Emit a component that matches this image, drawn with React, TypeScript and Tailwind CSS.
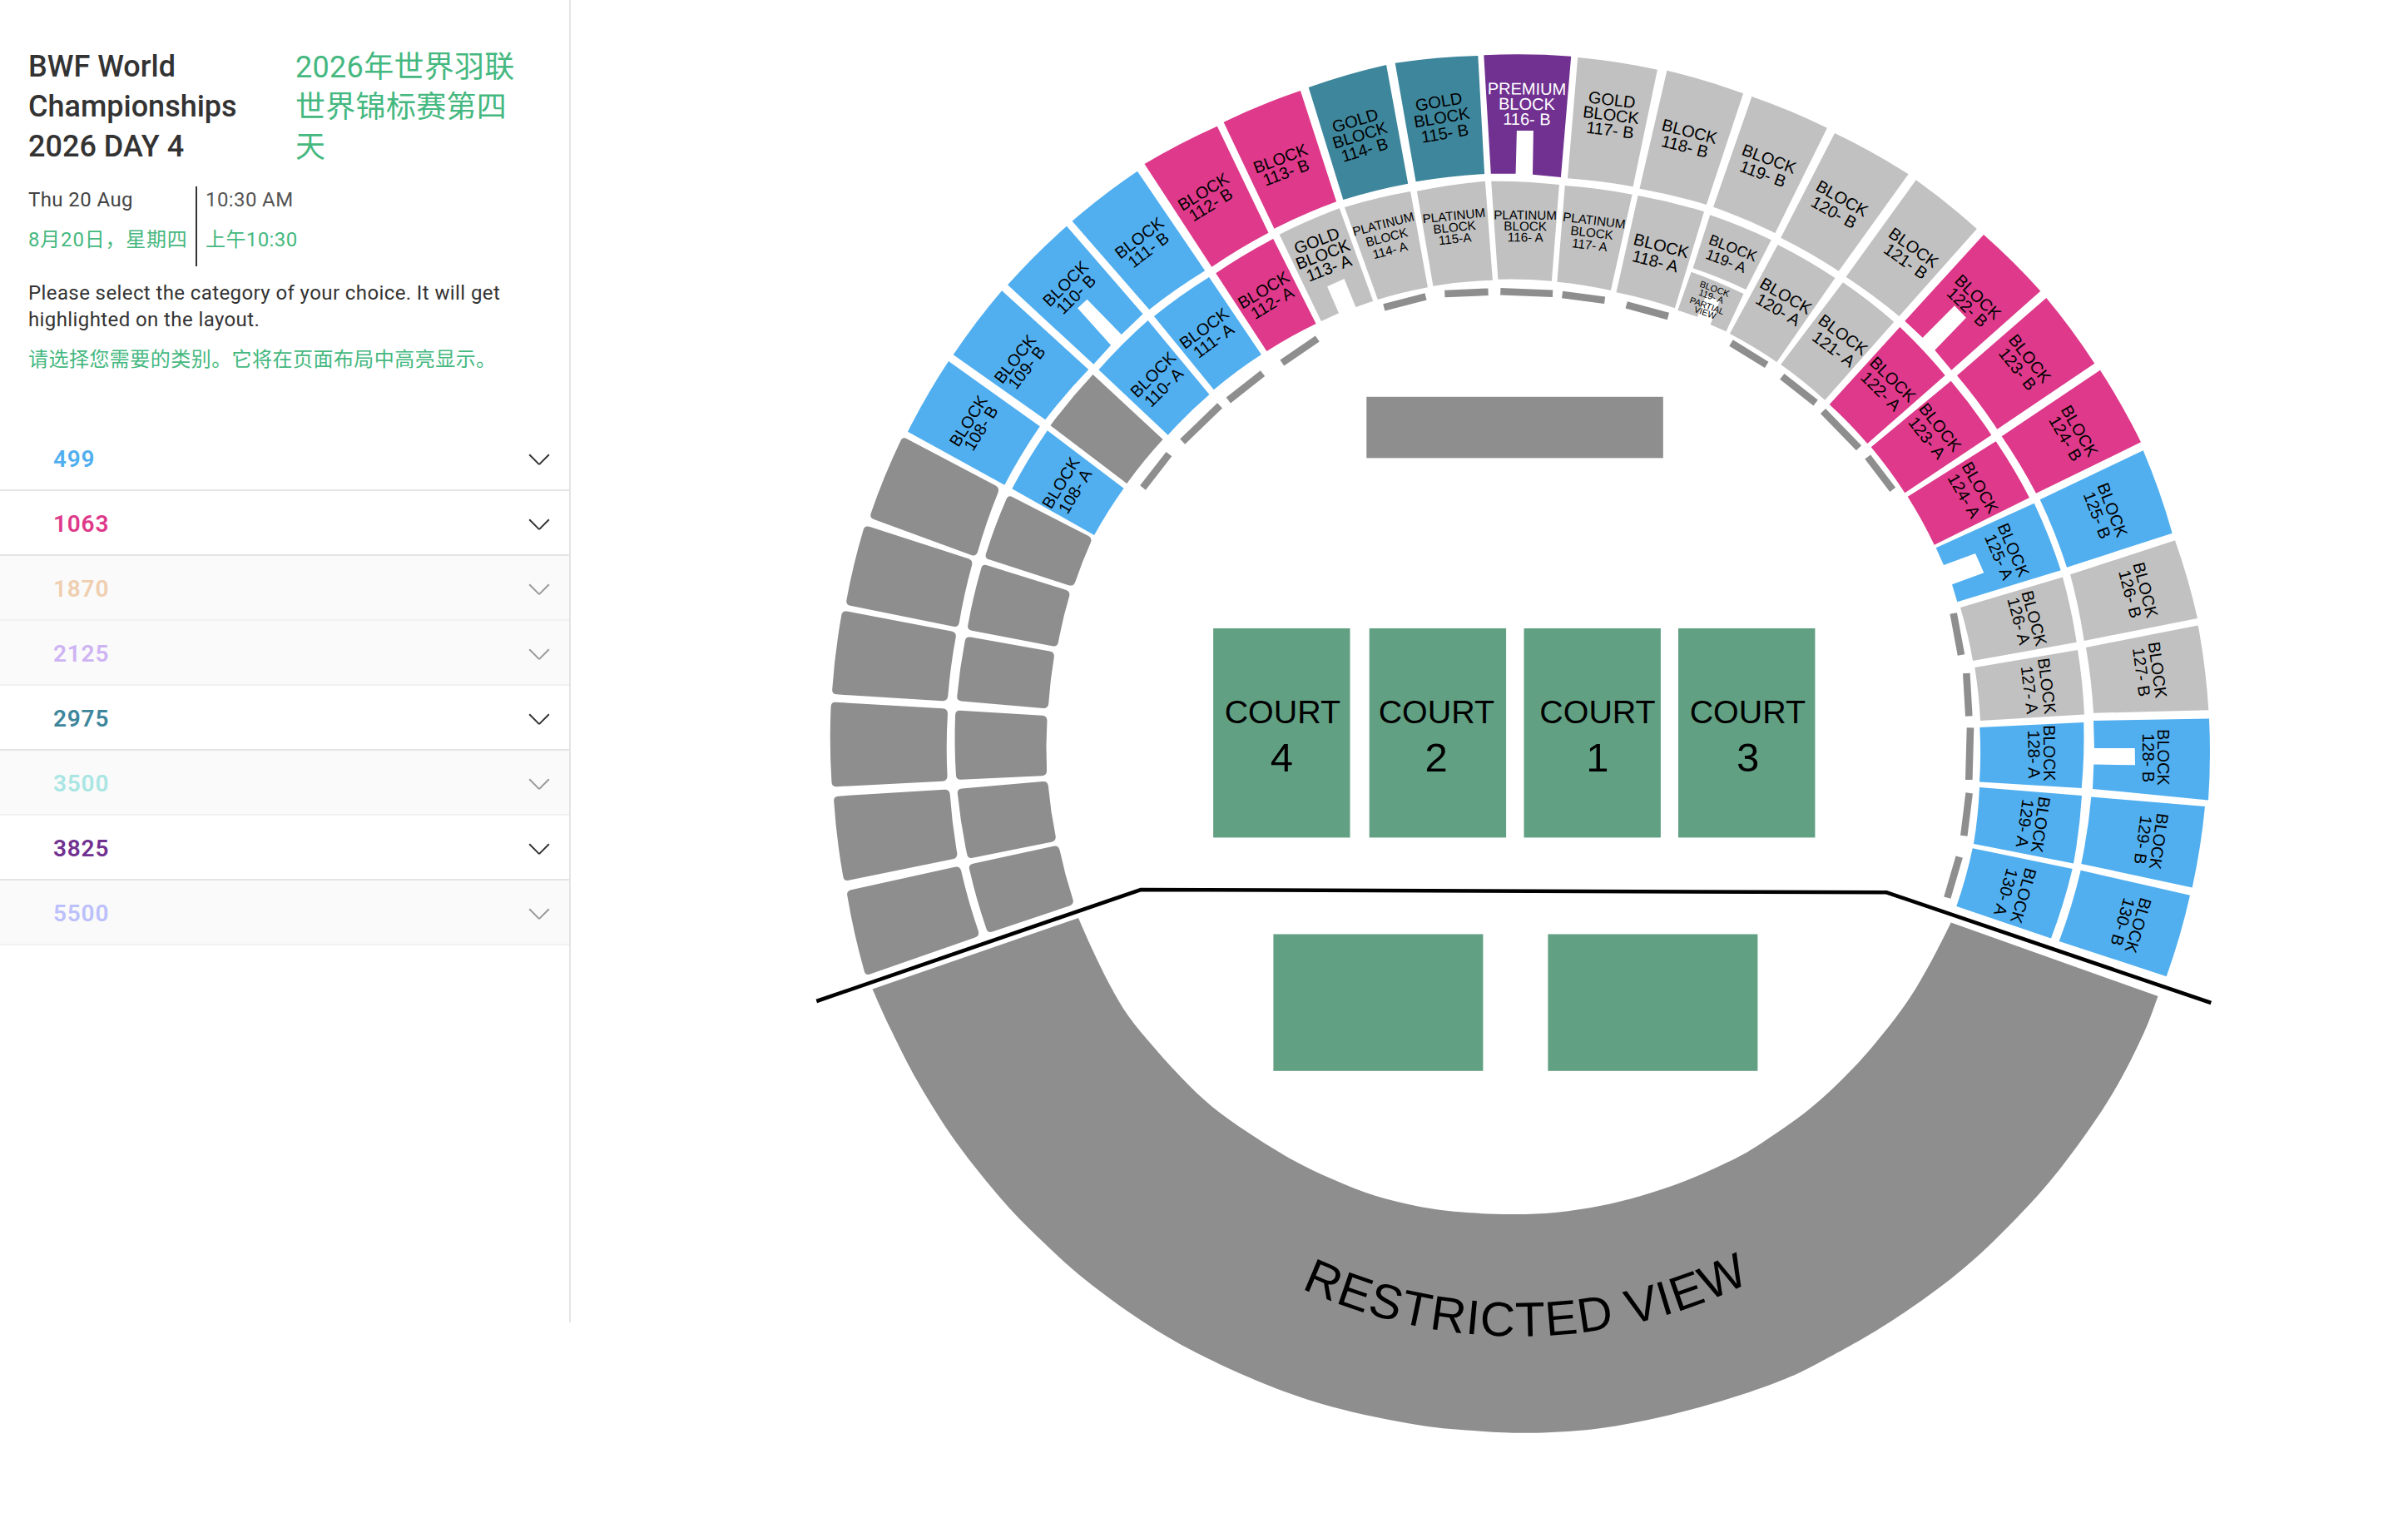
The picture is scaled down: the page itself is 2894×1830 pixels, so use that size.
type Price = {
  value: string;
  colour: string;
  soldOut?: boolean;
};

type Block = {
  fill: string;
  // outer edge first, then clockwise back along the inner edge
  pts: number[][];
  outer: number;
  inner: number;
};

type Label = {
  lines: string[];
  // centre of the first and of the last line
  from: [number, number];
  to: [number, number];
  angle: number;
  size?: number;
  fill?: string;
};

const BLUE = "#51aff0";
const PINK = "#de398a";
const TEAL = "#3e869c";
const PURPLE = "#713191";
const SILVER = "#c1c1c1";
const GREY = "#8e8e8e";
const GREEN = "#62a083";

const prices: Price[] = [
  { value: "499", colour: "text-[#51aff0]" },
  { value: "1063", colour: "text-[#de398a]" },
  { value: "1870", colour: "text-[#efcfb0]", soldOut: true },
  { value: "2125", colour: "text-[#ceb4f3]", soldOut: true },
  { value: "2975", colour: "text-[#3e869c]" },
  { value: "3500", colour: "text-[#a9e6e3]", soldOut: true },
  { value: "3825", colour: "text-[#713191]" },
  { value: "5500", colour: "text-[#bcc0fb]", soldOut: true },
];

function upper(fill: string, ...pts: number[][]): Block {
  return { fill, pts, outer: 829, inner: 686 };
}

function lower(fill: string, ...pts: number[][]): Block {
  return { fill, pts, outer: 677, inner: 556 };
}

const blocks: Block[] = [
  upper(BLUE, [1091, 518.7], [1140, 434], [1249.8, 512.3], [1207.3, 582.7]),
  upper(BLUE, [1145.7, 426.3], [1204.1, 349.3], [1308.2, 444], [1256.3, 504.3]),
  upper(BLUE, [1211, 342.3], [1282, 271.7], [1373.5, 377.3], [1347.8, 402], [1306.5, 359.7], [1295.1, 370.3], [1335.1, 414.7], [1314.3, 437.7]),
  upper(BLUE, [1288.6, 265.7], [1366.9, 205.7], [1448.2, 325.3], [1381.2, 372]),
  upper(PINK, [1375.5, 197], [1462.9, 151.7], [1524.5, 279.7], [1456.3, 320.7]),
  upper(PINK, [1470.6, 146.7], [1562.9, 109], [1606.1, 242.3], [1531.4, 274.7]),
  upper(TEAL, [1572.7, 105], [1666.1, 78], [1692.2, 220.7], [1614.3, 240]),
  upper(TEAL, [1676.7, 75.7], [1776.3, 67], [1784.1, 209], [1701.6, 218.3]),
  upper(PURPLE, [1783.3, 66.3], [1888.2, 67.7], [1875.9, 213], [1842, 209.7], [1842.9, 157], [1822.9, 157], [1821.6, 208.7], [1791.8, 208.7]),
  upper(SILVER, [1896.2, 69], [1991.9, 83.7], [1962.6, 224.3], [1884, 214.3]),
  upper(SILVER, [2003.4, 84.7], [2095.1, 112.3], [2050.8, 246], [1970.5, 226.7]),
  upper(SILVER, [2105.4, 116], [2195.9, 153.7], [2133.5, 280], [2059.1, 248.7]),
  upper(SILVER, [2205, 160], [2293.6, 209.3], [2209.8, 325.7], [2140.2, 285.7]),
  upper(SILVER, [2302.7, 216.3], [2375.8, 275], [2282.5, 380], [2218.5, 332.7]),
  upper(PINK, [2384, 282], [2452.3, 349.7], [2345.3, 444.7], [2325.3, 420.7], [2363, 381.7], [2349, 367.3], [2310.7, 405.7], [2289.3, 385.7]),
  upper(PINK, [2459.3, 358], [2517.3, 436.7], [2400.3, 515.7], [2352, 451.3]),
  upper(PINK, [2524, 444.7], [2573, 531.3], [2447, 592.7], [2405.7, 524.3]),
  upper(BLUE, [2575.7, 541.3], [2610.7, 640.7], [2484, 681.7], [2451.7, 600.3]),
  upper(SILVER, [2614, 649.3], [2641, 743], [2504.7, 770], [2488, 690.3]),
  upper(SILVER, [2641.7, 751.4], [2654.3, 853.2], [2516, 856.8], [2507, 777.9]),
  upper(BLUE, [2655, 863.6], [2654, 961.4], [2515, 947.9], [2516.3, 918.6], [2566, 919.3], [2565.7, 898.9], [2517, 898.9], [2516, 866]),
  upper(BLUE, [2650, 968.9], [2634.7, 1066.4], [2501.3, 1037.9], [2513.3, 957.5]),
  upper(BLUE, [2632, 1075.7], [2603.7, 1173.2], [2474.7, 1131], [2500.7, 1045.7]),

  lower(BLUE, [1216.3, 587.3], [1258.8, 517.3], [1350.6, 586.7], [1315.1, 643]),
  lower(GREY, [1262.4, 511.3], [1313.5, 450], [1397.6, 528], [1354.3, 581]),
  lower(BLUE, [1320.4, 444.3], [1379.6, 385], [1453.5, 474], [1403.7, 522.7]),
  lower(BLUE, [1386.9, 380], [1453.1, 333], [1515.9, 426], [1458.8, 468.3]),
  lower(PINK, [1461.2, 328.3], [1530.2, 287], [1581.6, 389], [1522.4, 422]),
  lower(SILVER, [1537.6, 281.7], [1609.8, 250.3], [1650.2, 361.7], [1629.4, 369], [1615.5, 335], [1595.1, 344.3], [1609, 376.3], [1587.8, 386]),
  lower(SILVER, [1615.9, 249], [1695.1, 230], [1715.9, 345.3], [1655.9, 360]),
  lower(SILVER, [1702.9, 229.7], [1784.9, 217.7], [1793.9, 336.7], [1722.4, 343.7]),
  lower(SILVER, [1792.2, 217.7], [1873.9, 222], [1864.9, 337.7], [1800.4, 335.7]),
  lower(SILVER, [1880.8, 223], [1961.6, 233.7], [1935.9, 349], [1871.4, 338.7]),
  lower(SILVER, [1968.6, 235], [2048, 254.3], [2012.9, 370.3], [1942.5, 351.3]),
  lower(SILVER, [2055.2, 258.3], [2128.7, 288.3], [2098.3, 348], [2034.6, 322.3]),
  lower(SILVER, [2032.6, 326.7], [2095.5, 353], [2074.5, 398.3], [2055.6, 390], [2066.5, 362], [2050.5, 355], [2040.1, 380.7], [2016.4, 372.7]),
  lower(SILVER, [2136.6, 294], [2205.4, 334], [2135.4, 435], [2078.9, 401]),
  lower(SILVER, [2214.9, 339.3], [2276.2, 386.7], [2193.2, 480.7], [2140.2, 438]),
  lower(PINK, [2283.3, 393], [2337.7, 451], [2244.3, 533], [2198.7, 486]),
  lower(PINK, [2344.7, 457.7], [2393.3, 522.7], [2289.3, 592.3], [2248.7, 537.3]),
  lower(PINK, [2398.7, 530.3], [2439, 598], [2324.7, 654.7], [2292.7, 596.7]),
  lower(BLUE, [2444.7, 604.7], [2476.7, 685.3], [2352.3, 723.3], [2346, 702.3], [2384.3, 688.3], [2374, 665], [2336, 679], [2326.7, 658.3]),
  lower(SILVER, [2479, 693.6], [2495.7, 771.8], [2371, 793.9], [2356, 730]),
  lower(SILVER, [2497, 781], [2505, 858.6], [2380, 866], [2373.3, 802]),
  lower(BLUE, [2504.3, 867.9], [2501.7, 947], [2379, 939.6], [2379.3, 873.9]),
  lower(BLUE, [2502, 956], [2492, 1037.5], [2372, 1013.9], [2379, 946]),
  lower(BLUE, [2490.7, 1043.9], [2465, 1127.5], [2351.3, 1089], [2370.7, 1019.3]),
];

// closed sections on the west side, drawn with rounded corners
const closedBlocks: Block[] = [
  upper(GREY, [1044.5, 622], [1084.5, 524.5], [1201.5, 586], [1173, 669]),
  upper(GREY, [1016, 726.5], [1039, 631], [1169.5, 673], [1151.5, 754]),
  upper(GREY, [999.5, 834], [1012, 733.5], [1149.5, 759.5], [1138.5, 842.5]),
  upper(GREY, [999.5, 945.5], [998.5, 843.5], [1139, 851.5], [1138.5, 938.5]),
  upper(GREY, [1014, 1059], [1001.5, 957], [1141, 948.5], [1151, 1031]),
  upper(GREY, [1040, 1172.5], [1017, 1070.5], [1153.5, 1040.5], [1177.5, 1124.5]),

  lower(GREY, [1183, 670.5], [1211.5, 594.5], [1313, 646.5], [1290, 705]),
  lower(GREY, [1162, 756.5], [1180.5, 677.5], [1286.5, 710.5], [1270.5, 777.5]),
  lower(GREY, [1149.5, 842], [1160.5, 764.5], [1267.5, 783.5], [1259.5, 851.5]),
  lower(GREY, [1149, 937], [1148, 853.5], [1258.5, 860], [1258, 932]),
  lower(GREY, [1163, 1032], [1150, 948], [1259, 938.5], [1269.5, 1010.5]),
  lower(GREY, [1187, 1121.5], [1163.5, 1039], [1272, 1015.5], [1291, 1086.5]),
];

const labels: Label[] = [
  { lines: ["BLOCK", "108- B"], from: [1163.7, 505.7], to: [1178.8, 514.3], angle: -58 },
  { lines: ["BLOCK", "109- B"], from: [1219.8, 431.2], to: [1233.8, 441.5], angle: -52 },
  { lines: ["BLOCK", "110- B"], from: [1280.4, 340.7], to: [1293, 353.5], angle: -45 },
  { lines: ["BLOCK", "111- B"], from: [1369, 285.7], to: [1380, 300], angle: -37.5 },
  { lines: ["BLOCK", "112- B"], from: [1446.1, 230.3], to: [1455, 245.7], angle: -31.5 },
  { lines: ["BLOCK", "113- B"], from: [1538.8, 190.3], to: [1545.5, 207], angle: -20.5 },
  { lines: ["GOLD", "BLOCK", "114- B"], from: [1628.6, 144.7], to: [1640, 179.9], angle: -17 },
  { lines: ["GOLD", "BLOCK", "115- B"], from: [1729, 122], to: [1736.3, 160], angle: -9.5 },
  { lines: ["PREMIUM", "BLOCK", "116- B"], from: [1835, 106.5], to: [1835, 143], angle: 0.5, fill: "#ffffff" },
  { lines: ["GOLD", "BLOCK", "117- B"], from: [1937.3, 119.7], to: [1935, 156], angle: 7 },
  { lines: ["BLOCK", "118- B"], from: [2030.6, 157.7], to: [2025, 175.7], angle: 14.5 },
  { lines: ["BLOCK", "119- B"], from: [2126.3, 190.7], to: [2118.8, 208.7], angle: 20.5 },
  { lines: ["BLOCK", "120- B"], from: [2214, 238.3], to: [2204.2, 255], angle: 29.5 },
  { lines: ["BLOCK", "121- B"], from: [2300, 297.3], to: [2290.5, 313.7], angle: 35.5 },
  { lines: ["BLOCK", "122- B"], from: [2377.3, 356.7], to: [2364.7, 369], angle: 44 },
  { lines: ["BLOCK", "123- B"], from: [2439.7, 430.7], to: [2425, 443.3], angle: 51.5 },
  { lines: ["BLOCK", "124- B"], from: [2499.3, 517.7], to: [2482.7, 526.7], angle: 60 },
  { lines: ["BLOCK", "125- B"], from: [2539, 612.7], to: [2520.7, 619], angle: 69 },
  { lines: ["BLOCK", "126- B"], from: [2578.7, 708.7], to: [2560.3, 713.7], angle: 75.5 },
  { lines: ["BLOCK", "127- B"], from: [2593.3, 805], to: [2574, 807.5], angle: 82.5 },
  { lines: ["BLOCK", "128- B"], from: [2600.3, 910], to: [2582, 910.7], angle: 90 },
  { lines: ["BLOCK", "129- B"], from: [2594.7, 1011], to: [2575.7, 1009.3], angle: 98 },
  { lines: ["BLOCK", "130- B"], from: [2570, 1112], to: [2551.3, 1107.9], angle: 106.5 },

  { lines: ["BLOCK", "108- A"], from: [1274.7, 580], to: [1291.8, 590.3], angle: -59 },
  { lines: ["BLOCK", "110- A"], from: [1385.7, 450], to: [1398.4, 465.3], angle: -45 },
  { lines: ["BLOCK", "111- A"], from: [1447, 394.3], to: [1458.4, 409.3], angle: -36.5 },
  { lines: ["BLOCK", "112- A"], from: [1518.4, 348.3], to: [1529, 363.7], angle: -31 },
  { lines: ["GOLD", "BLOCK", "113- A"], from: [1582.4, 289], to: [1597, 322], angle: -21 },
  { lines: ["PLATINUM", "BLOCK", "114- A"], from: [1662.4, 269], to: [1670.6, 300.7], angle: -14.5, size: 15.2 },
  { lines: ["PLATINUM", "BLOCK", "115-A"], from: [1747.3, 259], to: [1748.6, 286.8], angle: -6, size: 15.2 },
  { lines: ["PLATINUM", "BLOCK", "116- A"], from: [1833, 258.3], to: [1833.3, 285], angle: 0.5, size: 15.2 },
  { lines: ["PLATINUM", "BLOCK", "117- A"], from: [1915.9, 264.7], to: [1910.6, 294.3], angle: 7, size: 15.2 },
  { lines: ["BLOCK", "118- A"], from: [1996.6, 295], to: [1989.5, 313.7], angle: 14.5 },
  { lines: ["BLOCK", "119- A"], from: [2082.9, 297.7], to: [2074.5, 313.3], angle: 21, size: 17.8 },
  { lines: ["BLOCK", "119- A"], from: [2060.8, 347], to: [2056.7, 356], angle: 20, size: 11 },
  { lines: ["PARTIAL", "VIEW"], from: [2051.6, 367.3], to: [2049.2, 375.5], angle: 20, size: 10.6 },
  { lines: ["BLOCK", "120- A"], from: [2146.5, 355.3], to: [2137, 371.7], angle: 30 },
  { lines: ["BLOCK", "121- A"], from: [2215.3, 402], to: [2204, 419.3], angle: 36.5 },
  { lines: ["BLOCK", "122- A"], from: [2275, 455.7], to: [2260.7, 470], angle: 44.5 },
  { lines: ["BLOCK", "123- A"], from: [2332, 513.3], to: [2316, 526], angle: 51.5 },
  { lines: ["BLOCK", "124- A"], from: [2380, 585.7], to: [2360.7, 595.7], angle: 60 },
  { lines: ["BLOCK", "125- A"], from: [2420, 660.7], to: [2402.7, 669], angle: 67 },
  { lines: ["BLOCK", "126- A"], from: [2445, 742.9], to: [2426.7, 746], angle: 75 },
  { lines: ["BLOCK", "127- A"], from: [2460.3, 824.3], to: [2439.3, 829], angle: 83 },
  { lines: ["BLOCK", "128- A"], from: [2463.3, 905], to: [2444.7, 906.4], angle: 89.5 },
  { lines: ["BLOCK", "129- A"], from: [2452.7, 991], to: [2433.7, 989.3], angle: 98 },
  { lines: ["BLOCK", "130- A"], from: [2432, 1076.4], to: [2411, 1072], angle: 106 },
];

// low barriers between the stands and the arena floor
const barriers = [
  [1404.9, 545.7, 1373.5, 586],
  [1466, 487.3, 1421.2, 530.7],
  [1517.5, 448.7, 1476.3, 481],
  [1583.3, 407, 1540.8, 436],
  [1663.3, 369.3, 1713.5, 356.3],
  [1736.3, 353, 1788.6, 350.7],
  [1803.3, 350.3, 1866.1, 352.7],
  [1877.6, 354, 1928.6, 360.7],
  [1954.7, 366.3, 2004.9, 380],
  [2080.5, 412, 2123.2, 438.3],
  [2141.8, 452.3, 2182.1, 484],
  [2191, 494, 2234, 538.3],
  [2244.7, 549, 2274.7, 588.3],
  [2347.7, 737, 2357, 787],
  [2363.3, 809, 2366.3, 860.4],
  [2368, 874.3, 2366.3, 937],
  [2366.7, 952.9, 2360.3, 1004.3],
  [2354.7, 1029.6, 2340.3, 1078.6],
];

const courts = [
  { name: "4", x: 1458.1, label: 1541.3, digit: 1540.5 },
  { name: "2", x: 1645.7, label: 1726.3, digit: 1726.2 },
  { name: "1", x: 1831.5, label: 1920, digit: 1919.9 },
  { name: "3", x: 2017, label: 2100.3, digit: 2100.6 },
];

const restrictedOuter = [
  [2593.5, 1197], [2576.6, 1241], [2544.7, 1304], [2506.5, 1363], [2455.5, 1429],
  [2388, 1499], [2329, 1548.5], [2257.8, 1597], [2181.2, 1640], [2140, 1659],
  [2075.8, 1681.3], [1999, 1702], [1922.7, 1716.3], [1846, 1721.7], [1779.8, 1719.7],
  [1703, 1712], [1601.2, 1690.4], [1519.6, 1662.7], [1438, 1625.6], [1371.6, 1586.8],
  [1305.3, 1538.6], [1254.3, 1493], [1206.8, 1444.5], [1149.7, 1373.3], [1103.8, 1301.3],
  [1070.6, 1236.9], [1048.5, 1188.5],
];

const restrictedInner = [
  [1296, 1103], [1312.4, 1140], [1333.4, 1182.7], [1356.3, 1221], [1386.9, 1258.6],
  [1420, 1295], [1457, 1330], [1499.2, 1360.2], [1550.2, 1391.9], [1601.2, 1416.8],
  [1652, 1436.6], [1703, 1449.2], [1754.3, 1456.3], [1815.5, 1459], [1869, 1457],
  [1922.7, 1449], [1972, 1437], [2024, 1419.5], [2070, 1399.5], [2111, 1377.4], [2174.8, 1332.5],
  [2225.9, 1284.8], [2266, 1238.5], [2296, 1197.8], [2321.5, 1154.3], [2344.8, 1108.5],
];

function towards(a: number[], b: number[], dist: number) {
  const len = Math.hypot(b[0] - a[0], b[1] - a[1]);
  return [a[0] + ((b[0] - a[0]) * dist) / len, a[1] + ((b[1] - a[1]) * dist) / len];
}

function blockPath({ pts, outer, inner }: Block, corner: number) {
  const n = pts.length;
  let d = "";

  pts.forEach((p, i) => {
    const next = pts[(i + 1) % n];
    const start = towards(p, next, corner);
    const end = towards(next, p, corner);

    d += i === 0 ? `M${start.join(" ")}` : `Q${p.join(" ")} ${start.join(" ")}`;

    if (i === 0) {
      d += `A${outer} ${outer} 0 0 1 ${end.join(" ")}`;
    } else if (n === 4 && i === 2) {
      d += `A${inner} ${inner} 0 0 0 ${end.join(" ")}`;
    } else {
      d += `L${end.join(" ")}`;
    }
  });

  return `${d}Q${pts[0].join(" ")} ${towards(pts[0], pts[1], corner).join(" ")}Z`;
}

function smooth(pts: number[][]) {
  return pts
    .slice(1)
    .map((p, i) => {
      const before = pts[Math.max(i - 1, 0)];
      const from = pts[i];
      const after = pts[Math.min(i + 2, pts.length - 1)];
      const c1 = [from[0] + (p[0] - before[0]) / 6, from[1] + (p[1] - before[1]) / 6];
      const c2 = [p[0] - (after[0] - from[0]) / 6, p[1] - (after[1] - from[1]) / 6];
      return `C${c1.join(" ")} ${c2.join(" ")} ${p.join(" ")}`;
    })
    .join("");
}

function BlockLabel({ lines, from, to, angle, size = 20, fill = "#000000" }: Label) {
  return (
    <>
      {lines.map((line, i) => {
        const t = i / (lines.length - 1);
        const x = from[0] + (to[0] - from[0]) * t;
        const y = from[1] + (to[1] - from[1]) * t;

        return (
          <text
            key={line}
            transform={`translate(${x} ${y}) rotate(${angle})`}
            dy={size * 0.355}
            fontSize={size}
            fill={fill}
            textAnchor="middle"
          >
            {line}
          </text>
        );
      })}
    </>
  );
}

function Chevron({ soldOut }: { soldOut?: boolean }) {
  return (
    <svg width="26" height="14" viewBox="0 0 26 14" fill="none">
      <path
        d="M1.2 1.2L11.8 11.9Q13 13 14.2 11.9L24.8 1.2"
        stroke={soldOut ? "#999999" : "#333333"}
        strokeWidth="2"
      />
    </svg>
  );
}

function PriceRow({ value, colour, soldOut }: Price) {
  return (
    <button
      className={`flex h-[78px] w-full items-center justify-between border-b-2 pt-[3px] pr-[23px] pl-16 ${
        soldOut ? "border-[#f1f1f1] bg-[#fafafa]" : "border-[#e4e4e4] bg-white"
      }`}
    >
      <span className={`text-[28px] leading-none font-semibold tracking-[0.8px] ${colour}`}>
        {value}
      </span>
      <Chevron soldOut={soldOut} />
    </button>
  );
}

function Sidebar() {
  return (
    <aside className="h-[1589px] w-[686px] shrink-0 border-r-2 border-[#e4e4e4] pt-14">

      <div className="grid h-36 grid-cols-[321px_284px] pl-[34px] text-[36px] leading-[48px]">
        <h1 className="font-medium text-[#333333]">
          BWF World Championships 2026 DAY 4
        </h1>
        <h1 className="pt-px tracking-[0.3px] text-[#45b880]">
          2026年世界羽联世界锦标赛第四天
        </h1>
      </div>

      <div className="mt-6 flex h-24 pl-[34px] text-2xl leading-8 tracking-[0.4px]">
        <div className="flex w-[203px] flex-col gap-4 border-r-2 border-[#333333]">
          <div className="h-8 text-[#444444]">Thu 20 Aug</div>
          <div className="h-8 tracking-[0.8px] whitespace-nowrap text-[#45b880]">8月20日，星期四</div>
        </div>
        <div className="flex flex-col gap-4 pl-[10px]">
          <div className="h-8 text-[#555555]">10:30 AM</div>
          <div className="h-8 text-[#45b880]">上午10:30</div>
        </div>
      </div>

      <div className="mt-4 pl-[34px] text-2xl leading-8">
        <p className="w-[600px] tracking-[0.4px] text-[#333333]">
          Please select the category of your choice. It will get highlighted on the layout.
        </p>
        <p className="mt-4 h-8 tracking-[0.46px] text-[#45b880]">
          请选择您需要的类别。它将在页面布局中高亮显示。
        </p>
      </div>

      <div className="mt-16">
        {prices.map((price) => (
          <PriceRow key={price.value} {...price} />
        ))}
      </div>

    </aside>
  );
}

function VenueMap() {
  return (
    <svg
      className="h-[1830px] w-[2208px]"
      viewBox="686 0 2208 1830"
      fontFamily="'Liberation Sans', Arial, sans-serif"
    >
      {blocks.map((block, i) => (
        <path key={i} d={blockPath(block, 0.01)} fill={block.fill} />
      ))}
      {closedBlocks.map((block, i) => (
        <path key={i} d={blockPath(block, 6)} fill={block.fill} />
      ))}

      {barriers.map(([x1, y1, x2, y2]) => (
        <line key={x1} x1={x1} y1={y1} x2={x2} y2={y2} stroke={GREY} strokeWidth="8.6" />
      ))}

      {labels.map((label, i) => (
        <BlockLabel key={i} {...label} />
      ))}

      <rect x="1642.3" y="476.8" width="356.5" height="73.6" fill={GREY} />

      {courts.map((court) => (
        <g key={court.name} textAnchor="middle">
          <rect x={court.x} y="755" width="164.4" height="251.4" fill={GREEN} />
          <text x={court.label} y="869" fontSize="39.4">COURT</text>
          <text x={court.digit} y="927" fontSize="49">{court.name}</text>
        </g>
      ))}
      <rect x="1530.4" y="1122.5" width="252" height="164.3" fill={GREEN} />
      <rect x="1860.4" y="1122.5" width="252" height="164.3" fill={GREEN} />

      <path
        d={`M${restrictedOuter[0].join(" ")}${smooth(restrictedOuter)}L${restrictedInner[0].join(" ")}${smooth(restrictedInner)}Z`}
        fill={GREY}
      />
      <path
        d="M981.3 1203L1371 1069L2267.3 1072.3L2657.3 1205"
        fill="none"
        stroke="#000000"
        strokeWidth="4.6"
      />

      <path id="restricted" d="M1564 1548A624 624 0 0 0 2150 1515" fill="none" />
      <text fontSize="58.4" letterSpacing="1.35">
        <textPath href="#restricted">RESTRICTED VIEW</textPath>
      </text>
    </svg>
  );
}

export default function App() {
  return (
    <div className="flex h-[1830px] w-full items-start overflow-hidden bg-white font-[Roboto,'Noto_Sans_CJK_SC',sans-serif]">
      <Sidebar />
      <VenueMap />
    </div>
  );
}
